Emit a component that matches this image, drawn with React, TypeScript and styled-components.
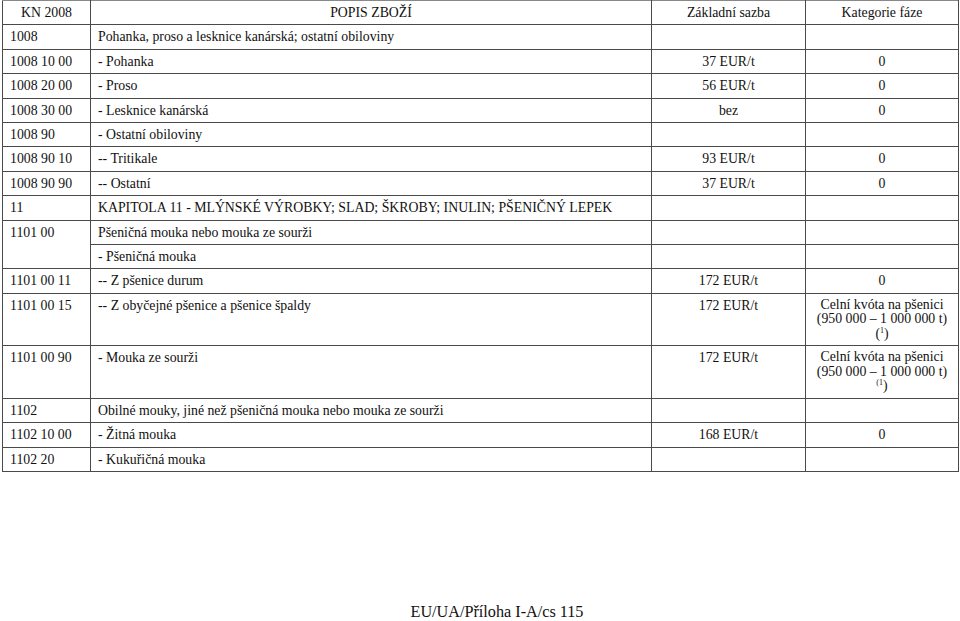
import styled, { createGlobalStyle } from 'styled-components';

const GlobalStyle = createGlobalStyle`
  html, body {
    margin: 0;
    padding: 0;
    background: #fff;
  }
  body {
    font-family: "Liberation Serif", "Times New Roman", serif;
    color: #111;
  }
`;

const Page = styled.div`
  width: 960px;
  height: 621px;
  display: flex;
  flex-direction: column;
  box-sizing: border-box;
  padding: 0 2px;
  overflow: hidden;
`;

const TariffTable = styled.table`
  width: 956px;
  border-collapse: collapse;
  table-layout: fixed;
  border-top: 1px solid #888;
`;

const cellText = `
  font-family: "Liberation Serif", "Times New Roman", serif;
  font-size: 13.8px;
  line-height: 15.4px;
  color: #111;
`;

const Cell = styled.td<{ $align?: 'left' | 'center' }>`
  ${cellText}
  border: 1px solid #4a4a4a;
  padding: 4px 7px;
  vertical-align: top;
  text-align: ${(p) => p.$align ?? 'left'};
  white-space: nowrap;
`;

const HeadCell = styled.th`
  ${cellText}
  border: 1px solid #4a4a4a;
  border-top-color: #888;
  padding: 4px 7px;
  font-weight: normal;
  text-align: center;
  vertical-align: top;
`;

const Note = styled.div`
  line-height: 14.5px;
`;

const Sup = styled.sup`
  font-size: 8px;
  line-height: 0;
  vertical-align: 5px;
`;

const Footer = styled.div`
  margin-top: auto;
  text-align: center;
  font-size: 16.2px;
  line-height: 17px;
  padding-left: 34px;
`;

type Row = { code?: string; text: string; rate?: string; cat?: string; span?: boolean; skipCode?: boolean };

const rows: Row[] = [
  { code: '1008', text: 'Pohanka, proso a lesknice kanárská; ostatní obiloviny' },
  { code: '1008 10 00', text: '- Pohanka', rate: '37 EUR/t', cat: '0' },
  { code: '1008 20 00', text: '- Proso', rate: '56 EUR/t', cat: '0' },
  { code: '1008 30 00', text: '- Lesknice kanárská', rate: 'bez', cat: '0' },
  { code: '1008 90', text: '- Ostatní obiloviny' },
  { code: '1008 90 10', text: '-- Tritikale', rate: '93 EUR/t', cat: '0' },
  { code: '1008 90 90', text: '-- Ostatní', rate: '37 EUR/t', cat: '0' },
  { code: '11', text: 'KAPITOLA 11 - MLÝNSKÉ VÝROBKY; SLAD; ŠKROBY; INULIN; PŠENIČNÝ LEPEK' },
  { code: '1101 00', text: 'Pšeničná mouka nebo mouka ze sourži', span: true },
  { text: '- Pšeničná mouka', skipCode: true },
  { code: '1101 00 11', text: '-- Z pšenice durum', rate: '172 EUR/t', cat: '0' },
];

const tail: Row[] = [
  { code: '1102', text: 'Obilné mouky, jiné než pšeničná mouka nebo mouka ze sourži' },
  { code: '1102 10 00', text: '- Žitná mouka', rate: '168 EUR/t', cat: '0' },
  { code: '1102 20', text: '- Kukuřičná mouka' },
];

function PlainRow({ row }: { row: Row }) {
  return (
    <tr>
      {!row.skipCode && <Cell rowSpan={row.span ? 2 : 1}>{row.code}</Cell>}
      <Cell>{row.text}</Cell>
      <Cell $align="center">{row.rate}</Cell>
      <Cell $align="center">{row.cat}</Cell>
    </tr>
  );
}

export default function App() {
  return (
    <>
      <GlobalStyle />
      <Page>
        <TariffTable>
          <colgroup>
            <col style={{ width: 88 }} />
            <col style={{ width: 561 }} />
            <col style={{ width: 154 }} />
            <col style={{ width: 153 }} />
          </colgroup>
          <thead>
            <tr>
              <HeadCell>KN 2008</HeadCell>
              <HeadCell>POPIS ZBOŽÍ</HeadCell>
              <HeadCell>Základní sazba</HeadCell>
              <HeadCell>Kategorie fáze</HeadCell>
            </tr>
          </thead>
          <tbody>
            {rows.map((r, i) => (
              <PlainRow key={i} row={r} />
            ))}
            <tr>
              <Cell>1101 00 15</Cell>
              <Cell>-- Z obyčejné pšenice a pšenice špaldy</Cell>
              <Cell $align="center">172 EUR/t</Cell>
              <Cell $align="center">
                <Note>Celní kvóta na pšenici</Note>
                <Note>(950 000 – 1 000 000 t)</Note>
                <Note>
                  (<Sup>1</Sup>)
                </Note>
              </Cell>
            </tr>
            <tr>
              <Cell>1101 00 90</Cell>
              <Cell>- Mouka ze sourži</Cell>
              <Cell $align="center">172 EUR/t</Cell>
              <Cell $align="center">
                <Note>Celní kvóta na pšenici</Note>
                <Note>(950 000 – 1 000 000 t)</Note>
                <Note>
                  <Sup>(1</Sup>)
                </Note>
              </Cell>
            </tr>
            {tail.map((r, i) => (
              <PlainRow key={i} row={r} />
            ))}
          </tbody>
        </TariffTable>
        <Footer>EU/UA/Příloha I-A/cs 115</Footer>
      </Page>
    </>
  );
}
